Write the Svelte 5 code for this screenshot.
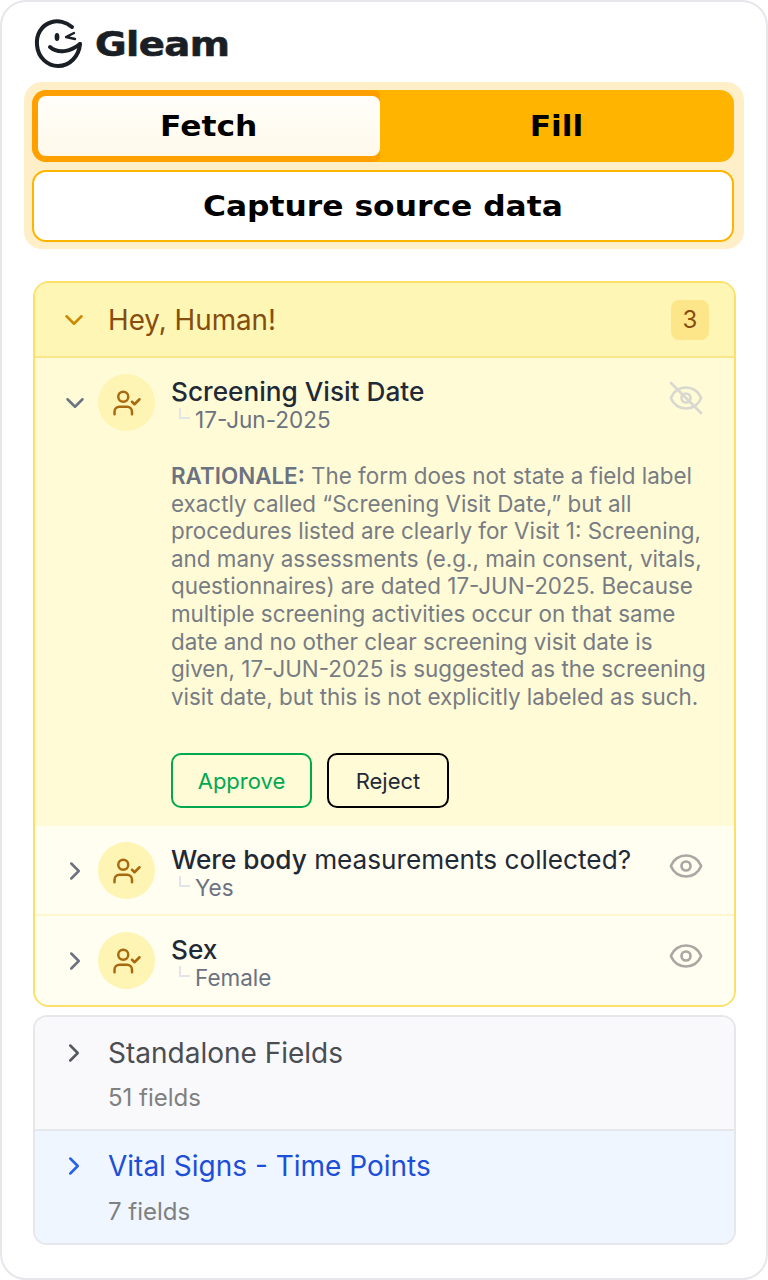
<script>
  const rows = [
    { bold: "Were body", rest: " measurements collected?", value: "Yes" },
    { bold: "Sex", rest: "", value: "Female" },
  ];
</script>

{#snippet chevronDown(cls)}
  <svg class="chev {cls}" viewBox="0 0 24 24" fill="none" stroke="currentColor" stroke-width="2" stroke-linecap="round" stroke-linejoin="round"><path d="m6 9 6 6 6-6" /></svg>
{/snippet}

{#snippet chevronRight(cls)}
  <svg class="chev {cls}" viewBox="0 0 24 24" fill="none" stroke="currentColor" stroke-width="2" stroke-linecap="round" stroke-linejoin="round"><path d="m9 18 6-6-6-6" /></svg>
{/snippet}

{#snippet avatar()}
  <div class="avatar">
    <svg viewBox="0 0 24 24" fill="none" stroke="currentColor" stroke-width="2" stroke-linecap="round" stroke-linejoin="round">
      <path d="M16 21v-2a4 4 0 0 0-4-4H6a4 4 0 0 0-4 4v2" />
      <circle cx="9" cy="7" r="4" />
      <polyline points="16 11 18 13 22 9" />
    </svg>
  </div>
{/snippet}

{#snippet elbow()}
  <span class="elbow"></span>
{/snippet}

<div class="panel">
  <header class="brand">
    <svg class="logo" viewBox="30 12 60 60" fill="none" stroke="#1a1f26" stroke-linecap="round" stroke-linejoin="round">
      <path stroke-width="4" d="M72 25C66 20 58 18 52 20 41 23 36 33 37 43c1 13 11 21 21 21 12 0 21-10 22-22" />
      <path stroke-width="4" d="M50 45c8 7 20 5 30-3" />
      <ellipse cx="57" cy="35" rx="2.4" ry="4" fill="#1a1f26" stroke="none" />
      <path stroke-width="2.4" d="m74 31-8 4 9 2" />
    </svg>
    <span class="wordmark">Gleam</span>
  </header>

  <div class="actions">
    <div class="tabs">
      <button class="tab active"><span class="wide">Fetch</span></button>
      <button class="tab"><span class="wide">Fill</span></button>
    </div>
    <button class="capture"><span class="wide">Capture source data</span></button>
  </div>

  <section class="human">
    <div class="human-head">
      {@render chevronDown("amber")}
      <span class="human-title">Hey, Human!</span>
      <span class="count">3</span>
    </div>

    <div class="item open">
      <div class="item-row">
        {@render chevronDown("slate")}
        {@render avatar()}
        <div class="item-text">
          <div class="item-title"><b>Screening Visit Date</b></div>
          <div class="item-value">{@render elbow()}17-Jun-2025</div>
        </div>
        <svg class="eye off" viewBox="0 0 24 24" fill="none" stroke="currentColor" stroke-width="1.8" stroke-linecap="round" stroke-linejoin="round">
          <path d="M2.06 12.35a1 1 0 0 1 0-.7 10.75 10.75 0 0 1 19.88 0 1 1 0 0 1 0 .7 10.75 10.75 0 0 1-19.88 0" />
          <circle cx="12" cy="12" r="3" />
          <path d="m2 2 20 20" />
        </svg>
      </div>
      <p class="rationale">
        <b>RATIONALE:</b> The form does not state a field label exactly called “Screening Visit Date,” but all procedures listed are clearly for Visit 1: Screening, and many assessments (e.g., main consent, vitals, questionnaires) are dated 17-JUN-2025. Because multiple screening activities occur on that same date and no other clear screening visit date is given, 17-JUN-2025 is suggested as the screening visit date, but this is not explicitly labeled as such.
      </p>
      <div class="decide">
        <button class="approve">Approve</button>
        <button class="reject">Reject</button>
      </div>
    </div>

    {#each rows as row}
      <div class="item">
        <div class="item-row">
          {@render chevronRight("slate")}
          {@render avatar()}
          <div class="item-text">
            <div class="item-title"><b>{row.bold}</b>{row.rest}</div>
            <div class="item-value">{@render elbow()}{row.value}</div>
          </div>
          <svg class="eye" viewBox="0 0 24 24" fill="none" stroke="currentColor" stroke-width="1.8" stroke-linecap="round" stroke-linejoin="round">
            <path d="M2.06 12.35a1 1 0 0 1 0-.7 10.75 10.75 0 0 1 19.88 0 1 1 0 0 1 0 .7 10.75 10.75 0 0 1-19.88 0" />
            <circle cx="12" cy="12" r="3" />
          </svg>
        </div>
      </div>
    {/each}
  </section>

  <section class="groups">
    <div class="group">
      <div class="group-head">
        {@render chevronRight("dark")}
        <span class="group-title">Standalone Fields</span>
      </div>
      <div class="group-count">51 fields</div>
    </div>
    <div class="group current">
      <div class="group-head">
        {@render chevronRight("blue")}
        <span class="group-title">Vital Signs - Time Points</span>
      </div>
      <div class="group-count">7 fields</div>
    </div>
  </section>
</div>

<style>
  :global(body) {
    background: #fff;
    font-family: Inter, "Noto Sans", sans-serif;
  }

  .panel {
    box-sizing: border-box;
    height: 1280px;
    width: 768px;
    padding: 12px 30px 0 22px;
    background: #fff;
    border: 2px solid #e5e7eb;
    border-radius: 26px;
    display: flex;
    flex-direction: column;
  }

  button {
    font-family: inherit;
    cursor: pointer;
  }

  .brand {
    display: flex;
    align-items: center;
    gap: 10px;
    height: 60px;
    margin-left: 6px;
  }

  .logo {
    width: 60px;
    height: 60px;
  }

  .wordmark {
    margin-left: -5px;
    font-family: "DejaVu Sans", sans-serif;
    font-weight: 700;
    font-size: 33px;
    letter-spacing: -0.5px;
    color: #1a1f26;
    -webkit-text-stroke: 0.6px #1a1f26;
    transform: scaleX(1.17);
    transform-origin: left center;
  }

  .actions {
    margin: 8px -8px 0 0;
    padding: 8px 10px 7px 8px;
    background: #feefc9;
    border-radius: 18px;
    display: flex;
    flex-direction: column;
    gap: 8px;
  }

  .tabs {
    height: 72px;
    box-sizing: border-box;
    padding: 6px 0 6px 6px;
    background: #ffb400;
    border-radius: 14px;
    display: grid;
    grid-template-columns: 342px 1fr;
  }

  .tab {
    border: 0;
    background: none;
    padding: 0;
  }

  .wide {
    display: inline-block;
    font-family: "DejaVu Sans", sans-serif;
    font-weight: 700;
    font-size: 27.5px;
    color: #000;
    transform: scaleX(1.14);
  }

  .tab.active {
    background: linear-gradient(180deg, #fffefa, #fff9ea);
    border-radius: 8px;
    box-shadow: 0 0 0 6px #ff9f00;
    clip-path: inset(-6px 0 -6px -6px round 14px 0 0 14px);
  }

  .capture {
    height: 72px;
    border: 2px solid #ffb400;
    border-radius: 14px;
    background: #fff;
  }

  .human {
    margin: 32px 0 0 9px;
    border: 2px solid #fde068;
    border-radius: 16px;
    overflow: hidden;
  }

  .human-head {
    height: 73px;
    padding: 0 25px 0 24px;
    background: #fef6b4;
    border-bottom: 2px solid #fde68a;
    display: flex;
    align-items: center;
  }

  .chev {
    width: 30px;
    height: 30px;
    flex: none;
  }

  .amber { color: #ca8a04; }
  .slate { color: #6b7280; }
  .dark { color: #55585d; }
  .blue { color: #2563eb; }

  .human-title {
    margin-left: 19px;
    flex: 1;
    font-size: 27.8px;
    color: #854d0e;
  }

  .count {
    width: 38px;
    height: 40px;
    border-radius: 8px;
    background: #fde68a;
    color: #854d0e;
    font-size: 24px;
    display: flex;
    align-items: center;
    justify-content: center;
  }

  .item {
    background: #fffef0;
    border-bottom: 2px solid #fef7cd;
    padding: 16px 30px 14px 24px;
  }

  .item:last-child {
    border-bottom: 0;
    padding-bottom: 15px;
  }

  .item.open {
    background: #fffbd6;
    border-bottom: 0;
    height: 468px;
    box-sizing: border-box;
  }

  .item-row {
    display: flex;
    align-items: flex-start;
  }

  .item-row .chev {
    margin: 14px 8px 0 1px;
  }

  .avatar {
    width: 57px;
    height: 57px;
    flex: none;
    border-radius: 50%;
    background: #fef4b3;
    color: #a8690f;
    display: flex;
    align-items: center;
    justify-content: center;
  }

  .avatar svg {
    width: 30px;
    height: 30px;
  }

  .item-text {
    flex: 1;
    margin: 1px 0 0 16px;
    min-width: 0;
  }

  .item-title {
    font-size: 26.2px;
    line-height: 33px;
    color: #1f2937;
    white-space: nowrap;
  }

  .item-title b {
    font-weight: 500;
  }

  .item-value {
    display: flex;
    align-items: flex-start;
    font-size: 22.5px;
    line-height: 24px;
    color: #6b7280;
  }

  .elbow {
    width: 11px;
    height: 11px;
    margin: 0 5px 0 8px;
    border-left: 2px solid #e1e4ea;
    border-bottom: 2px solid #e1e4ea;
    box-sizing: border-box;
  }

  .eye {
    width: 36px;
    height: 36px;
    flex: none;
    margin-top: 6px;
    color: #a8a8a4;
  }

  .eye.off {
    color: #d8d8d0;
  }

  .rationale {
    margin: 30px -8px 0 112px;
    font-size: 22.4px;
    line-height: 27.6px;
    color: #777c84;
  }

  .rationale b {
    font-weight: 600;
    color: #6b7280;
  }

  .decide {
    margin: 43px 0 0 112px;
    display: flex;
    gap: 15px;
  }

  .decide button {
    height: 55px;
    border-radius: 10px;
    background: none;
    font-size: 22px;
    padding: 0;
  }

  .approve {
    width: 141px;
    border: 2px solid #00a94f;
    color: #00a94f;
  }

  .reject {
    width: 122px;
    border: 2px solid #000;
    color: #1f2937;
  }

  .groups {
    margin: 8px 0 0 9px;
    border: 2px solid #e5e7eb;
    border-radius: 14px;
    overflow: hidden;
  }

  .group {
    height: 112px;
    box-sizing: border-box;
    padding: 19px 24px 0;
    background: #f9f9fb;
  }

  .group.current {
    height: 114px;
    padding-top: 18px;
    background: #eff6ff;
    border-top: 2px solid #e5e7eb;
  }

  .group-head {
    display: flex;
    align-items: center;
  }

  .group-title {
    margin-left: 19px;
    font-size: 28px;
    color: #4a4d52;
  }

  .current .group-title {
    color: #1d4ed8;
  }

  .group-count {
    margin: 13px 0 0 49px;
    font-size: 24px;
    color: #808080;
  }

  .current .group-count {
    margin-top: 14px;
  }
</style>
